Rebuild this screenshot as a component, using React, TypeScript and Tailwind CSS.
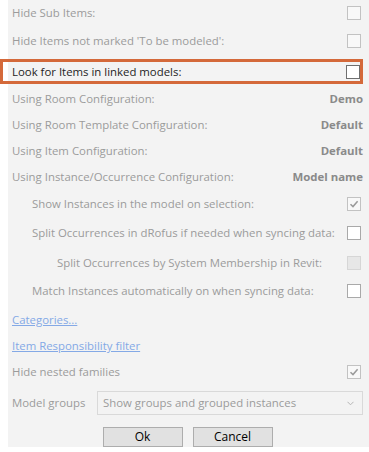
import React from "react";

type BoxKind = "off" | "dim" | "on" | "plain" | "checked";

const Box = ({ kind }: { kind: BoxKind }) => {
  const styles: Record<BoxKind, string> = {
    off: "border-[#c2c2c2] bg-[#f8f8f8]",
    dim: "border-[#d6d6d6] bg-[#e7e7e7]",
    on: "border-[#6f6f6f] bg-white",
    plain: "border-[#a9a9a9] bg-white",
    checked: "border-[#c2c2c2] bg-[#f8f8f8]",
  };
  return (
    <div
      className={`w-[14px] h-[14px] border flex items-center justify-center shrink-0 ${styles[kind]}`}
    >
      {kind === "checked" && (
        <svg width="10" height="10" viewBox="0 0 10 10">
          <path
            d="M1.5 5.2 L4 7.6 L8.6 2.2"
            fill="none"
            stroke="#9a9a9a"
            strokeWidth="1.5"
          />
        </svg>
      )}
    </div>
  );
};

const CheckRow = ({
  label,
  kind,
  h,
  indent = "pl-1",
}: {
  label: string;
  kind: BoxKind;
  h: string;
  indent?: string;
}) => (
  <div className={`flex items-center justify-between pr-2 ${h} ${indent}`}>
    <span className="text-[#9b9b9b]">{label}</span>
    <Box kind={kind} />
  </div>
);

const ValueRow = ({ label, value, h }: { label: string; value: string; h: string }) => (
  <div className={`flex items-center justify-between pl-1 pr-[6px] ${h}`}>
    <span className="text-[#9b9b9b]">{label}</span>
    <span className="font-bold text-[#8a8a8a]">{value}</span>
  </div>
);

const App = () => {
  return (
    <div className="w-[369px] h-[452px] bg-white font-['Open_Sans',sans-serif] text-[11.4px] leading-none">
      <div className="ml-2 h-[447px] bg-[#f3f3f3] flex flex-col">
        <CheckRow label="Hide Sub Items:" kind="off" h="h-[26px]" />
        <CheckRow label="Hide Items not marked 'To be modeled':" kind="off" h="h-[30px]" />
        <div className="h-[31px] pt-[3px]">
          <div className="-ml-2 mr-[6px] h-[25px] border-[3px] border-[#d4693a] flex items-center justify-between pl-[9px] pr-0">
            <span className="text-[#1e1e1e]">Look for Items in linked models:</span>
            <Box kind="on" />
          </div>
        </div>
        <ValueRow label="Using Room Configuration:" value="Demo" h="h-[24px]" />
        <ValueRow label="Using Room Template Configuration:" value="Default" h="h-[27px]" />
        <ValueRow label="Using Item Configuration:" value="Default" h="h-[26px]" />
        <ValueRow label="Using Instance/Occurrence Configuration:" value="Model name" h="h-[26px]" />
        <CheckRow
          label="Show Instances in the model on selection:"
          kind="checked"
          h="h-[28px]"
          indent="pl-6"
        />
        <CheckRow
          label="Split Occurrences in dRofus if needed when syncing data:"
          kind="plain"
          h="h-[30px]"
          indent="pl-6"
        />
        <CheckRow
          label="Split Occurrences by System Membership in Revit:"
          kind="dim"
          h="h-[30px]"
          indent="pl-[49px]"
        />
        <CheckRow
          label="Match Instances automatically on when syncing data:"
          kind="plain"
          h="h-[26px]"
          indent="pl-6"
        />
        <div className="h-[32px] flex items-center pl-1">
          <span className="text-[#84a9e6] underline">Categories...</span>
        </div>
        <div className="h-[20px] flex items-center pl-1">
          <span className="text-[#84a9e6] underline">Item Responsibility filter</span>
        </div>
        <CheckRow label="Hide nested families" kind="checked" h="h-[32px]" />
        <div className="h-[30px] flex items-center justify-between pl-1 pr-[6px]">
          <span className="text-[#9b9b9b]">Model groups</span>
          <div className="w-[266px] h-[24px] border border-[#d9d9d9] flex items-center justify-between pl-[5px] pr-[8px]">
            <span className="text-[#9b9b9b]">Show groups and grouped instances</span>
            <svg width="7" height="5" viewBox="0 0 7 5">
              <path d="M0.5 0.8 L3.5 3.8 L6.5 0.8" fill="none" stroke="#b5b5b5" strokeWidth="1" />
            </svg>
          </div>
        </div>
        <div className="h-[29px] pt-[9px] flex justify-center gap-[10px] pr-[2px]">
          <button className="w-[80px] h-[20px] border border-[#adadad] bg-[#e1e1e1] text-black text-[12px]">
            Ok
          </button>
          <button className="w-[80px] h-[20px] border border-[#adadad] bg-[#e1e1e1] text-black text-[12px]">
            Cancel
          </button>
        </div>
      </div>
    </div>
  );
};

export default App;
